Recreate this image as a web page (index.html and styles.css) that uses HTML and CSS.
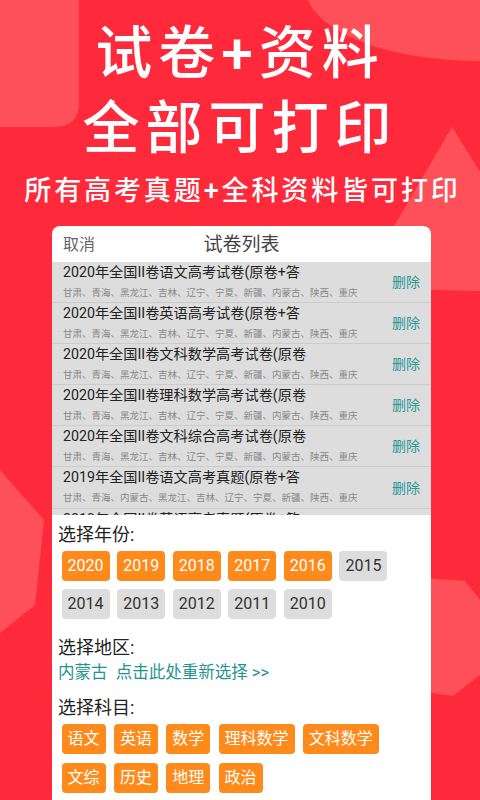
FILE: index.html
```html
<!DOCTYPE html>
<html lang="zh">
    <head>
        <meta charset="UTF-8" />
        <title>试卷列表</title>
        <link rel="stylesheet" href="styles.css">
    </head>
    <body>
        <!-- 背景色块 -->
        <svg class="bg" width="480" height="800" viewBox="0 0 480 800">
            <path d="M0 0H79V102Q79 127 54 127H0Z" fill="#fe5059" />
            <path d="M308 0H480V61Q400 60 350 37Q316 20 308 0Z" fill="#fe5059" />
            <path d="M393 228L452 127L480 172V291L393 289Z" fill="#fe5059" />
            <path d="M425 578L465 581L480 600V675L453 696L425 692Z" fill="#fe5059" />
            <path d="M0 470L44 520L35 605L0 633Z" fill="#fe5059" />
        </svg>

        <div class="head">
            <h1>试卷+资料</h1>
            <h1>全部可打印</h1>
            <h2>所有高考真题+全科资料皆可打印</h2>
        </div>

        <div class="card">
            <div class="top">
                <span class="cancel">取消</span>
                <span class="title">试卷列表</span>
            </div>
            <ul class="list">
                <li>
                    <div class="info">
                        <h3>2020年全国II卷语文高考试卷(原卷+答</h3>
                        <p>甘肃、青海、黑龙江、吉林、辽宁、宁夏、新疆、内蒙古、陕西、重庆</p>
                    </div>
                    <span class="del">删除</span>
                </li>
                <li>
                    <div class="info">
                        <h3>2020年全国II卷英语高考试卷(原卷+答</h3>
                        <p>甘肃、青海、黑龙江、吉林、辽宁、宁夏、新疆、内蒙古、陕西、重庆</p>
                    </div>
                    <span class="del">删除</span>
                </li>
                <li>
                    <div class="info">
                        <h3>2020年全国II卷文科数学高考试卷(原卷</h3>
                        <p>甘肃、青海、黑龙江、吉林、辽宁、宁夏、新疆、内蒙古、陕西、重庆</p>
                    </div>
                    <span class="del">删除</span>
                </li>
                <li>
                    <div class="info">
                        <h3>2020年全国II卷理科数学高考试卷(原卷</h3>
                        <p>甘肃、青海、黑龙江、吉林、辽宁、宁夏、新疆、内蒙古、陕西、重庆</p>
                    </div>
                    <span class="del">删除</span>
                </li>
                <li>
                    <div class="info">
                        <h3>2020年全国II卷文科综合高考试卷(原卷</h3>
                        <p>甘肃、青海、黑龙江、吉林、辽宁、宁夏、新疆、内蒙古、陕西、重庆</p>
                    </div>
                    <span class="del">删除</span>
                </li>
                <li>
                    <div class="info">
                        <h3>2019年全国II卷语文高考真题(原卷+答</h3>
                        <p>甘肃、青海、内蒙古、黑龙江、吉林、辽宁、宁夏、新疆、陕西、重庆</p>
                    </div>
                    <span class="del">删除</span>
                </li>
                <li class="cut">
                    <div class="info">
                        <h3>2019年全国II卷英语高考真题(原卷+答</h3>
                    </div>
                </li>
            </ul>
            <div class="filter">
                <div class="label">选择年份:</div>
                <div class="tags years">
                    <span class="tag on">2020</span>
                    <span class="tag on">2019</span>
                    <span class="tag on">2018</span>
                    <span class="tag on">2017</span>
                    <span class="tag on">2016</span>
                    <span class="tag">2015</span>
                    <span class="tag">2014</span>
                    <span class="tag">2013</span>
                    <span class="tag">2012</span>
                    <span class="tag">2011</span>
                    <span class="tag">2010</span>
                </div>
                <div class="label area">选择地区:</div>
                <div class="link">内蒙古&nbsp;&nbsp;点击此处重新选择 &gt;&gt;</div>
                <div class="label subject">选择科目:</div>
                <div class="tags subjects">
                    <span class="tag on">语文</span>
                    <span class="tag on">英语</span>
                    <span class="tag on">数学</span>
                    <span class="tag on">理科数学</span>
                    <span class="tag on">文科数学</span>
                    <span class="tag on">文综</span>
                    <span class="tag on">历史</span>
                    <span class="tag on">地理</span>
                    <span class="tag on">政治</span>
                </div>
            </div>
        </div>
    </body>
</html>
```

FILE: styles.css
```css
body {
    margin: 0;
    width: 480px;
    height: 800px;
    overflow: hidden;
    background: #fe2a3c;
    font-family: "Roboto", "Noto Sans CJK SC", sans-serif;
    position: relative;
}
ul {
    margin: 0;
    padding: 0;
    list-style: none;
}
h1,
h2,
h3,
p {
    margin: 0;
    font-weight: normal;
}
.bg {
    position: absolute;
    top: 0;
    left: 0;
}
.head {
    position: relative;
    height: 226px;
    padding-top: 16px;
    box-sizing: border-box;
    text-align: center;
    color: #fff;
}
.head h1 {
    font-size: 57px;
    line-height: 75px;
    font-weight: 500;
    letter-spacing: 6px;
}
.head h2 {
    margin-top: 7px;
    padding-left: 5px;
    font-size: 27px;
    line-height: 36px;
    font-weight: 500;
    letter-spacing: 2.9px;
}
.card {
    position: relative;
    margin-left: 52px;
    width: 379px;
    height: 574px;
    background: #fff;
    border-radius: 8px 8px 0 0;
    overflow: hidden;
}
.top {
    height: 36px;
    position: relative;
    text-align: center;
    line-height: 37px;
    color: #444;
}
.cancel {
    position: absolute;
    left: 11px;
    top: 0;
    font-size: 16px;
    color: #666;
}
.title {
    font-size: 19px;
}
.list {
    height: 253px;
    overflow: hidden;
    background: #ddd;
}
.list li {
    height: 41.1px;
    display: flex;
    align-items: center;
    padding: 0 11px;
    border-bottom: 1px solid #ccc;
    box-sizing: border-box;
}
.list li.cut {
    height: 7px;
    overflow: hidden;
    border-bottom: 0;
}
.info {
    flex: 1;
    align-self: flex-start;
}
.list h3 {
    font-size: 14.2px;
    line-height: 21px;
    color: #222;
    white-space: nowrap;
}
.list p {
    margin-top: 1px;
    font-size: 9.5px;
    line-height: 17px;
    color: #888;
    white-space: nowrap;
}
.del {
    font-size: 14px;
    color: #2a9a96;
    margin-top: -2px;
}
.filter {
    padding: 8px 6px;
}
.label {
    font-size: 18px;
    line-height: 24px;
    color: #222;
}
.tags {
    display: flex;
    flex-wrap: wrap;
    gap: 8px;
    margin-top: 4px;
    padding: 0 3.6px;
}
.years {
    column-gap: 7.6px;
}
.subjects {
    column-gap: 8.3px;
    row-gap: 9px;
}
.tag {
    padding: 0 6px;
    height: 30px;
    line-height: 30px;
    font-size: 16px;
    border-radius: 4px;
    background: #ddd;
    color: #333;
}
.tag.on {
    background: #ff8a1c;
    color: #fff;
}
.area {
    margin-top: 17px;
}
.link {
    margin-top: 2px;
    font-size: 16.5px;
    line-height: 22px;
    color: #1f9490;
}
.subject {
    margin-top: 12px;
}
```
